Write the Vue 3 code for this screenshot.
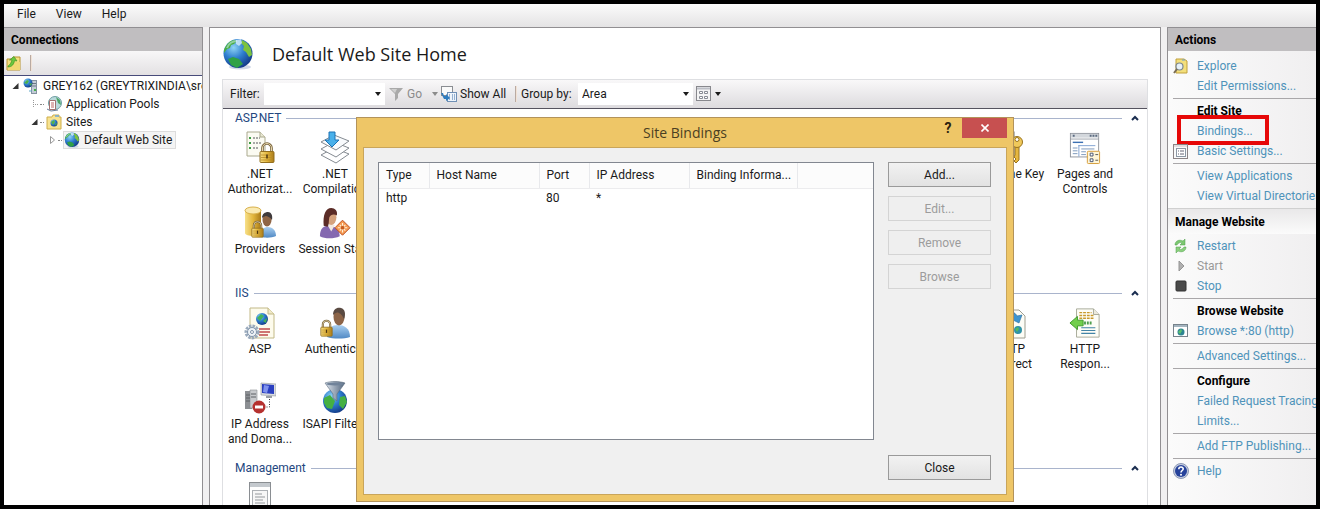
<script setup>
import { ref } from 'vue'

const menus = ['File', 'View', 'Help']
const filter = ref('')
const groupBy = ref('Area')

const tree = [
  { label: 'GREY162 (GREYTRIXINDIA\\sre', icon: 'server', level: 1, state: 'open' },
  { label: 'Application Pools', icon: 'pools', level: 2, state: 'leaf' },
  { label: 'Sites', icon: 'sites', level: 2, state: 'open' },
  { label: 'Default Web Site', icon: 'globe', level: 3, state: 'closed', selected: true },
]

const groups = [
  {
    name: 'ASP.NET',
    items: [
      { label: '.NET Authorizat...', icon: 'authorization' },
      { label: '.NET Compilation', icon: 'compilation' },
      { label: 'Machine Key', icon: 'key', col: 'col-11' },
      { label: 'Pages and Controls', icon: 'pages' },
      { label: 'Providers', icon: 'providers', col: 'col-1' },
      { label: 'Session State', icon: 'session' },
    ],
  },
  {
    name: 'IIS',
    items: [
      { label: 'ASP', icon: 'asp' },
      { label: 'Authentic...', icon: 'authentication' },
      { label: 'HTTP Redirect', icon: 'redirect', col: 'col-11' },
      { label: 'HTTP Respon...', icon: 'response' },
      { label: 'IP Address and Doma...', icon: 'ip', col: 'col-1' },
      { label: 'ISAPI Filters', icon: 'isapi' },
    ],
  },
  { name: 'Management', items: [{ label: '', icon: 'editor' }] },
]

const actions = [
  { type: 'link', label: 'Explore', icon: 'explore' },
  { type: 'link', label: 'Edit Permissions...' },
  { type: 'rule' },
  { type: 'title', label: 'Edit Site' },
  { type: 'link', label: 'Bindings...', marked: true },
  { type: 'link', label: 'Basic Settings...', icon: 'settings' },
  { type: 'rule' },
  { type: 'link', label: 'View Applications' },
  { type: 'link', label: 'View Virtual Directories' },
  { type: 'section', label: 'Manage Website' },
  { type: 'link', label: 'Restart', icon: 'restart' },
  { type: 'off', label: 'Start', icon: 'start' },
  { type: 'link', label: 'Stop', icon: 'stop' },
  { type: 'rule' },
  { type: 'title', label: 'Browse Website' },
  { type: 'link', label: 'Browse *:80 (http)', icon: 'browse' },
  { type: 'rule' },
  { type: 'link', label: 'Advanced Settings...' },
  { type: 'rule' },
  { type: 'title', label: 'Configure' },
  { type: 'link', label: 'Failed Request Tracing' },
  { type: 'link', label: 'Limits...' },
  { type: 'rule' },
  { type: 'link', label: 'Add FTP Publishing...' },
  { type: 'rule' },
  { type: 'link', label: 'Help', icon: 'help' },
]

const bindings = [{ type: 'http', host: '', port: '80', ip: '*', info: '' }]
const dialogButtons = [
  { label: 'Add...', disabled: false },
  { label: 'Edit...', disabled: true },
  { label: 'Remove', disabled: true },
  { label: 'Browse', disabled: true },
]
</script>

<template>
  <div class="window">
    <svg class="sprite" aria-hidden="true">
      <defs>
        <radialGradient id="g-sea" cx="0.35" cy="0.3" r="0.8">
          <stop offset="0" stop-color="#8fd4f5" />
          <stop offset="0.45" stop-color="#2f7fd0" />
          <stop offset="1" stop-color="#0d2f7c" />
        </radialGradient>
        <linearGradient id="g-gold" x1="0" x2="1">
          <stop offset="0" stop-color="#f7e08a" />
          <stop offset="0.5" stop-color="#e3b73d" />
          <stop offset="1" stop-color="#a97a18" />
        </linearGradient>
        <linearGradient id="g-metal" x1="0" x2="1">
          <stop offset="0" stop-color="#dfe6ee" />
          <stop offset="1" stop-color="#51647c" />
        </linearGradient>
        <linearGradient id="g-blue" x1="0" x2="0" y1="0" y2="1">
          <stop offset="0" stop-color="#a9cff0" />
          <stop offset="1" stop-color="#5089c4" />
        </linearGradient>
      </defs>

      <symbol id="i-globe" viewBox="0 0 32 32">
        <ellipse cx="18" cy="29" rx="11" ry="2.500" fill="#b9c6dc" opacity="0.7" />
        <circle cx="16" cy="15.500" r="14.500" fill="url(#g-sea)" />
        <path d="M2 12C4 7 7 3 12 2l3 1-3 3-3 1-1 3-3 1-3 4z" fill="#4caf3f" />
        <path d="M20 2l5 3 4 6 1 6-3 2-3-5-3-2 1-4-3-3z" fill="#7cc23f" />
        <path d="M6 21l5-2 6 2 4 5-6 4-6-3z" fill="#2fa145" />
        <path d="M14 2l5-1 1 4-3 3-3-2z" fill="#d7eefa" opacity="0.8" />
        <path d="M5 10c2-5 6-7 10-7" stroke="#d8f3ff" stroke-width="2" fill="none" opacity="0.5" />
      </symbol>

      <symbol id="i-lock" viewBox="0 0 16 22">
        <path d="M3.500 11V6.500a4.500 4.500 0 0 1 9 0V11" fill="none" stroke="#77613a" stroke-width="2.600" />
        <path d="M3.500 11V6.500a4.500 4.500 0 0 1 9 0V11" fill="none" stroke="#e6d8ac" stroke-width="1" />
        <rect x="1" y="10" width="14" height="11" rx="1" fill="url(#g-gold)" stroke="#94701f" />
        <path d="M2 13.500h12M2 16h12M2 18.500h12" stroke="#b98b27" stroke-width="0.800" />
        <path d="M8 13v4" stroke="#4b3510" stroke-width="1.500" />
      </symbol>

      <symbol id="i-server" viewBox="0 0 16 16">
        <rect x="8.500" y="2.500" width="5" height="13" fill="#c3ccd6" stroke="#8592a0" />
        <path d="M9 5.500h4M9 8h4" stroke="#6a7885" />
        <rect x="11" y="11" width="2" height="2" fill="#43b049" />
        <circle cx="5" cy="5" r="4.500" fill="url(#g-sea)" />
        <path d="M1 5l3-3 2 1-2 3zM6 6l3-1-1 3z" fill="#4cb04a" />
        <path d="M6 13h3" stroke="#5fa7c7" />
      </symbol>
      <symbol id="i-pools" viewBox="0 0 16 16">
        <circle cx="9" cy="7" r="6.500" fill="#b9d9dc" stroke="#6f9ea3" />
        <path d="M10 1l4 3 1 5-3-2z" fill="#4ba567" />
        <path d="M3.500 4.500h6v9h-6z" fill="#fff" stroke="#a07070" />
        <path d="M5 7h3M5 9h3M5 11h3" stroke="#b66" />
        <path d="M1 13l4 2 7-1" stroke="#6a7e99" fill="none" />
      </symbol>
      <symbol id="i-sites" viewBox="0 0 16 16">
        <path d="M1 3h5l1-2h6v2h2v12H1z" fill="#f7e391" stroke="#cfae4a" />
        <path d="M9 2h4" stroke="#6ea8dc" stroke-width="1.500" />
        <circle cx="8" cy="9" r="3.500" fill="url(#g-sea)" />
        <path d="M5 8l3-2 1 2-2 3zM9 10l2-1-1 3z" fill="#53b149" />
      </symbol>
      <symbol id="i-folder-up" viewBox="0 0 16 16">
        <path d="M1 4h5l1-2h7v13H1z" fill="#f5df7e" stroke="#b8942f" />
        <path d="M1.500 15L4 7h10v8z" fill="#f2d873" />
        <path d="M2 11c2-1 3-3 4-6L3.500 5 8 1.500 11 6l-2.500-.3C8 9 6 12 2 12z" fill="#6cc63f" stroke="#3b8f22" stroke-width="0.600" />
      </symbol>

      <symbol id="i-authorization" viewBox="0 0 32 34">
        <path d="M3 1h13l5 5v19H3z" fill="#fbfbf2" stroke="#aaa98e" />
        <path d="M16 1v5h5" fill="#e8e7d2" stroke="#aaa98e" />
        <path d="M5 7h2M5 12h2M5 17h2" stroke="#3d9d44" stroke-width="2" />
        <path d="M9 7h7M9 12h8M9 17h6" stroke="#8d8d8d" stroke-width="1.500" stroke-dasharray="2 1" />
        <use href="#i-lock" x="15" y="10" width="16" height="23" />
      </symbol>
      <symbol id="i-compilation" viewBox="0 0 32 34">
        <path d="M2 24l13-7 15 6-13 9z" fill="#fff" stroke="#858b92" />
        <path d="M2 18l13-7 15 6-13 9z" fill="#fff" stroke="#858b92" />
        <path d="M2 11l13-7 15 6-13 9z" fill="#f9fbfd" stroke="#858b92" />
        <path d="M10 1h6v8h4l-7 7-7-7h4z" fill="#49b0ea" stroke="#1c73b5" />
      </symbol>
      <symbol id="i-key" viewBox="0 0 32 34">
        <rect x="8" y="1" width="12" height="24" fill="#9aa19b" stroke="#6c716c" />
        <path d="M21 14h4v15l-3 3-2-2 2-2-2-2 1-2z" fill="#e6b73f" stroke="#9a731d" />
        <circle cx="23" cy="11" r="5.500" fill="#f0c95b" stroke="#9a731d" />
        <circle cx="23" cy="8.500" r="2" fill="#fff" stroke="#9a731d" />
      </symbol>
      <symbol id="i-pages" viewBox="0 0 34 34">
        <rect x="1.500" y="1.500" width="30" height="25" fill="#fff" stroke="#8e939b" />
        <path d="M2 4h29" stroke="#d3d7dc" stroke-width="4" />
        <path d="M4 4h2M22 4h2M25 4h2M28 4h2" stroke="#5b6b80" stroke-width="2" />
        <path d="M2 7.500h29" stroke="#9ba0a8" />
        <path d="M4 11h11" stroke="#3c70b3" stroke-width="1.500" />
        <path d="M10 14.500h18M10.500 14v12" stroke="#7d9fd0" />
        <path d="M4 17h5M4 20h5M4 23h5M13 18h14M13 21h5M13 24h5" stroke="#7895ba" />
        <rect x="19.500" y="20.500" width="13" height="13" rx="1" fill="#fff6d8" stroke="#d49b35" />
        <path d="M22.500 22.500h3v3h-3zM22.500 28.500h3v3h-3z" fill="#fff" stroke="#44516d" />
        <path d="M28 24h3M28 30h3" stroke="#555" />
      </symbol>
      <symbol id="i-providers" viewBox="0 0 32 34">
        <path d="M1 4v23c0 2 4 3 9 3s7-1 7-3V4z" fill="url(#g-gold)" />
        <ellipse cx="9" cy="4.500" rx="8" ry="3.500" fill="#faeab2" stroke="#d8b04a" />
        <path d="M17 31c0-8 3-10 7-10s8 3 8 9c-4 2-11 2-15 1z" fill="url(#g-blue)" />
        <ellipse cx="23" cy="14" rx="4.500" ry="6.500" fill="#8f6545" />
        <path d="M18 12c0-4 3-6 6-6s5 3 4 8c-2-3-5-4-6-4s-3 1-4 2z" fill="#3f3a3b" />
        <use href="#i-lock" x="7" y="14" width="13" height="18" />
      </symbol>
      <symbol id="i-session" viewBox="0 0 34 34">
        <path d="M1 31c0-8 4-11 9-11s12 3 12 11c-6 3-16 3-21 0z" fill="#8468b0" />
        <path d="M9 19l4 7 4-7z" fill="#f3e8e0" />
        <ellipse cx="13" cy="11" rx="5.500" ry="8" fill="#d5a27d" />
        <path d="M5 20C4 8 7 1 13 1c4 0 7 3 6 8-3-2-7-1-8 2-1 5 0 8-2 10z" fill="#5b2c27" />
        <path d="M25 14l8 8-8 8-8-8z" fill="#f59a52" stroke="#b84b1e" />
        <path d="M25 17v10M20 22h10M22 19l6 6M28 19l-6 6" stroke="#fff0d9" stroke-width="1.200" />
        <circle cx="25" cy="22" r="2" fill="#c95c1d" />
      </symbol>

      <symbol id="i-asp" viewBox="0 0 32 34">
        <path d="M6 2h18l6 6v24H6z" fill="#fdfbec" stroke="#c2b987" />
        <path d="M24 2v6h6" fill="#f0e9c6" stroke="#c2b987" />
        <circle cx="18" cy="13" r="6" fill="url(#g-sea)" />
        <path d="M13 12l4-4 3 2-4 5zM19 15l4-3-1 5z" fill="#43b35a" />
        <path d="M15 23h11M15 26h11M15 29h9" stroke="#c04b4b" stroke-width="1.500" />
        <circle cx="8" cy="26" r="6" fill="none" stroke="#9aaabd" stroke-width="3" stroke-dasharray="2.500 1" />
        <circle cx="8" cy="26" r="4.500" fill="#eef3f8" stroke="#8093aa" />
        <circle cx="8" cy="26" r="1.500" fill="#fff" stroke="#8093aa" />
      </symbol>
      <symbol id="i-authentication" viewBox="0 0 32 34">
        <path d="M8 31c0-9 5-12 11-12s12 3 12 12c-6 2-17 2-23 0z" fill="url(#g-blue)" />
        <ellipse cx="20" cy="11" rx="5.500" ry="8.500" fill="#8c6448" />
        <path d="M14 9c0-6 4-8 8-7s5 6 3 11c-2-4-3-5-5-6s-4 0-6 2z" fill="#5a4a42" />
        <use href="#i-lock" x="1" y="12" width="13" height="20" />
      </symbol>
      <symbol id="i-redirect" viewBox="0 0 32 34">
        <path d="M8 4h17l6 6v22H8z" fill="#fdfdf6" stroke="#9e9e90" />
        <path d="M11 10c6-6 10-4 12 0l5-1-3 8-8-4 3-1c-2-3-6-2-9-2z" fill="#3f95cf" stroke="#26699d" stroke-width="0.600" />
        <circle cx="24" cy="24" r="4" fill="#2f92a7" />
        <path d="M21 23l3-2 1 2-2 3z" fill="#54b860" />
      </symbol>
      <symbol id="i-response" viewBox="0 0 34 34">
        <path d="M8 2h18l6 6v24H8z" fill="#fdfdf6" stroke="#a5a996" />
        <path d="M26 2v6h6" fill="#eceadd" stroke="#a5a996" />
        <path d="M11 6h13M11 9h16M11 12h16" stroke="#c99a2b" stroke-width="1.500" stroke-dasharray="3 1" />
        <path d="M16 17h8" stroke="#4d9e4d" stroke-width="3" stroke-dasharray="2 1" />
        <path d="M13 22h15M13 25h15M13 28h15" stroke="#4384a6" stroke-width="1.200" />
        <path d="M1 17l8-7v4h6v6H9v4z" fill="#72cf4c" stroke="#3e9a2a" />
      </symbol>
      <symbol id="i-ip" viewBox="0 0 32 34">
        <path d="M1 10h7v18H1z" fill="#8c8f93" />
        <path d="M6 9h7v18H6z" fill="#c8cacd" stroke="#8a8d90" stroke-width="0.600" />
        <path d="M2 14h4M2 17h4M2 20h4M7 13h5M7 16h5" stroke="#5c6064" />
        <path d="M17 2l15 1v12l-15-1z" fill="#d9dcdf" stroke="#8d9298" stroke-width="0.600" />
        <path d="M18 3l12 1v9l-12-1z" fill="#2a3fc0" />
        <path d="M20 4l5 1-2 7-4-1z" fill="#7f92ee" />
        <path d="M22 15h6v2h-6z" fill="#9a9fa5" />
        <path d="M25.500 18v8h-6" fill="none" stroke="#333" stroke-dasharray="1 1.500" />
        <circle cx="15" cy="26" r="6.500" fill="#b5312f" />
        <path d="M11 26h8" stroke="#fff" stroke-width="3" />
      </symbol>
      <symbol id="i-isapi" viewBox="0 0 32 34">
        <circle cx="16" cy="20" r="12" fill="url(#g-sea)" />
        <path d="M5 17l6-3 5 6-3 8-5-1-3-5zM21 16l5-1 2 6-4 7-4-4z" fill="#45b043" />
        <path d="M6 2c6-2 14-2 20 0l-8 11v7l-4-3v-4z" fill="url(#g-metal)" stroke="#5c6c7e" stroke-width="0.600" />
        <ellipse cx="16" cy="3" rx="9" ry="1.500" fill="#71839a" />
      </symbol>
      <symbol id="i-editor" viewBox="0 0 32 34">
        <rect x="5.500" y="1.500" width="21" height="31" fill="#fff" stroke="#8a8e92" />
        <path d="M6 4h20" stroke="#c4c9ce" stroke-width="4" />
        <rect x="8.500" y="9.500" width="15" height="18" fill="#f7f7f7" stroke="#adb1b5" />
        <path d="M11 13h7M11 16h10M11 19h8M11 22h10" stroke="#95999d" />
      </symbol>

      <symbol id="i-explore" viewBox="0 0 16 16">
        <path d="M3 1h8l3 2v12H3z" fill="#f3df7b" stroke="#c0a03c" />
        <path d="M9 2h3" stroke="#6aa0d0" />
        <circle cx="6.500" cy="8.500" r="3.500" fill="#e7f1f7" stroke="#7b8790" stroke-width="1.200" />
        <path d="M4 11l-3 4" stroke="#7a6d55" stroke-width="2" />
      </symbol>
      <symbol id="i-settings" viewBox="0 0 16 16">
        <rect x="0.500" y="1.500" width="14" height="14" fill="#fafafa" stroke="#8c8486" />
        <path d="M1 3h13" stroke="#c9c2c5" />
        <rect x="3.500" y="5.500" width="9" height="8" fill="#fff" stroke="#8d98a5" />
        <path d="M5 8h1M7 8h4M5 11h1M7 11h4" stroke="#667" />
      </symbol>
      <symbol id="i-restart" viewBox="0 0 16 16">
        <path d="M2 7c0-4 4-6 8-4l2-2v6H7l2-2C7 4 5 5 4 7z" fill="#7cc871" stroke="#4c9f49" stroke-width="0.500" />
        <path d="M13 9c0 4-4 6-8 4l-2 2V9h5l-2 2c2 1 4 0 5-2z" fill="#8bd07d" stroke="#4c9f49" stroke-width="0.500" />
      </symbol>
      <symbol id="i-start" viewBox="0 0 16 16">
        <path d="M6 3l5 5-5 5z" fill="#b0b0b0" stroke="#969696" />
      </symbol>
      <symbol id="i-stop" viewBox="0 0 16 16">
        <rect x="3" y="3" width="10" height="10" rx="1" fill="#4a4a4a" stroke="#333" />
      </symbol>
      <symbol id="i-browse" viewBox="0 0 16 16">
        <rect x="0.500" y="1.500" width="14" height="12" fill="#fff" stroke="#77838c" />
        <path d="M1 3h13" stroke="#a5b5c0" stroke-width="2" />
        <circle cx="8" cy="9" r="3.500" fill="#2c8592" />
        <path d="M5 9l3-3 1 2-2 3z" fill="#5cc06c" />
      </symbol>
      <symbol id="i-help" viewBox="0 0 16 16">
        <circle cx="8" cy="8" r="7.500" fill="#c5cddf" stroke="#8c98b5" />
        <circle cx="8" cy="8" r="6" fill="#26429b" />
        <path d="M5.800 6.200c0-3 4.600-2.800 4.400-.2C10.100 7.500 8 7.600 8 9.500" fill="none" stroke="#fff" stroke-width="1.600" />
        <circle cx="8" cy="11.800" r="1" fill="#fff" />
      </symbol>
      <symbol id="i-funnel" viewBox="0 0 16 16">
        <path d="M1 2h14l-5 6v4l-3 3V8z" fill="#a9a9a9" />
        <path d="M3 3h6l-2 4z" fill="#cfcfcf" />
      </symbol>
      <symbol id="i-showall" viewBox="0 0 16 16">
        <rect x="0.500" y="0.500" width="11" height="9" fill="#fafafa" stroke="#8a8d92" />
        <rect x="6.500" y="6.500" width="9" height="9" fill="#eef4fb" stroke="#6f8fb5" />
        <path d="M8 9h1M11 9h1M13 9h1M8 11h1M11 11h1M13 11h1M8 13h1M11 13h1M13 13h1" stroke="#3f6ea8" />
        <path d="M0 7h2l1 3h2V8l4 4-4 3v-2H3z" fill="#2e7cbf" />
      </symbol>
      <symbol id="i-view" viewBox="0 0 16 16">
        <rect x="0.500" y="0.500" width="14" height="14" fill="#f4f4f4" stroke="#88888d" />
        <path d="M1 2.500h13" stroke="#bcbec6" stroke-width="2" />
        <path d="M3.500 5.500h3v2h-3zM8.500 5.500h3v2h-3zM3.500 10.500h3v2h-3zM8.500 10.500h3v2h-3z" fill="#fff" stroke="#888b94" />
      </symbol>
      <symbol id="i-down" viewBox="0 0 6 4"><path d="M0 0h6L3 4z" fill="currentColor" /></symbol>
      <symbol id="i-chevron" viewBox="0 0 8 6">
        <path d="M1 5l3-3 3 3" fill="none" stroke="currentColor" stroke-width="2" />
      </symbol>
      <symbol id="i-open" viewBox="0 0 8 8"><path d="M6.500 1v6h-6z" fill="#333" /></symbol>
      <symbol id="i-closed" viewBox="0 0 8 8"><path d="M1.500 0.500l4 3.500-4 3.500z" fill="#fff" stroke="#999" /></symbol>
      <symbol id="i-leaf" viewBox="0 0 8 8"><path d="M2.500 0v8M2 4.500h6" stroke="#999" stroke-dasharray="1 1" /></symbol>
    </svg>

    <nav class="menubar">
      <button v-for="m in menus" :key="m" type="button">{{ m }}</button>
    </nav>

    <div class="panes">
      <aside class="connections">
        <h2 class="pane-title">Connections</h2>
        <div class="mini-toolbar">
          <button type="button" aria-label="Up"><svg class="i16"><use href="#i-folder-up" /></svg></button>
          <span class="divider"></span>
        </div>
        <ul class="tree">
          <li v-for="n in tree" :key="n.label" :class="'level-' + n.level">
            <svg class="twist"><use :href="'#i-' + n.state" /></svg>
            <span class="dots"></span>
            <span class="node" :class="{ selected: n.selected }">
              <svg class="i16"><use :href="'#i-' + n.icon" /></svg>
              <span>{{ n.label }}</span>
            </span>
          </li>
        </ul>
      </aside>

      <main class="home">
        <header class="home-head">
          <svg class="i32"><use href="#i-globe" /></svg>
          <h1>Default Web Site Home</h1>
        </header>

        <div class="content">
          <div class="toolbar">
            <label class="filter-label" for="filter">Filter:</label>
            <span class="combo filter">
              <input id="filter" v-model="filter" type="text" />
              <svg class="arrow"><use href="#i-down" /></svg>
            </span>
            <button class="go" type="button" disabled>
              <svg class="i16"><use href="#i-funnel" /></svg>Go
              <svg class="arrow go-arrow"><use href="#i-down" /></svg>
            </button>
            <button class="show" type="button"><svg class="i16"><use href="#i-showall" /></svg>Show All</button>
            <span class="divider"></span>
            <label class="group-label" for="group">Group by:</label>
            <span class="combo group-by">
              <select id="group" v-model="groupBy"><option>Area</option></select>
              <svg class="arrow"><use href="#i-down" /></svg>
            </span>
            <button class="view" type="button" aria-label="View">
              <svg class="i16"><use href="#i-view" /></svg>
              <svg class="arrow"><use href="#i-down" /></svg>
            </button>
          </div>

          <section v-for="g in groups" :key="g.name" class="group">
            <header class="group-head">
              <h3>{{ g.name }}</h3>
              <span class="line"></span>
              <button type="button" :aria-label="'Collapse ' + g.name"><svg class="chevron"><use href="#i-chevron" /></svg></button>
            </header>
            <div class="grid">
              <div v-for="f in g.items" :key="f.icon" class="feature" :class="f.col">
                <svg class="feature-icon"><use :href="'#i-' + f.icon" /></svg>
                <span>{{ f.label }}</span>
              </div>
            </div>
          </section>
        </div>
      </main>

      <aside class="actions">
        <h2 class="pane-title">Actions</h2>
        <div class="action-list">
          <template v-for="(a, i) in actions" :key="i">
            <hr v-if="a.type === 'rule'" />
            <h3 v-else-if="a.type === 'section'" class="section">{{ a.label }}</h3>
            <div v-else class="action">
              <svg v-if="a.icon" class="i16"><use :href="'#i-' + a.icon" /></svg>
              <span v-else class="i16"></span>
              <h4 v-if="a.type === 'title'">{{ a.label }}</h4>
              <button v-else-if="a.type === 'off'" type="button" disabled>{{ a.label }}</button>
              <a v-else href="#">{{ a.label }}</a>
              <span v-if="a.marked" class="mark"></span>
            </div>
          </template>
        </div>
      </aside>
    </div>

    <div class="dialog" role="dialog" aria-labelledby="dialog-title">
      <header class="dialog-head">
        <h2 id="dialog-title">Site Bindings</h2>
        <div class="caption">
          <button class="ask" type="button">?</button>
          <button class="shut" type="button" aria-label="Close window">
            <svg viewBox="0 0 8 8"><path d="M0.500 0.500l7 7M7.500 0.500l-7 7" stroke="#fff" stroke-width="1.600" /></svg>
          </button>
        </div>
      </header>
      <div class="dialog-body">
        <div class="list">
          <table>
            <colgroup>
              <col class="w-type" /><col class="w-host" /><col class="w-port" /><col class="w-ip" /><col class="w-info" /><col />
            </colgroup>
            <thead>
              <tr>
                <th>Type</th><th>Host Name</th><th>Port</th><th>IP Address</th><th>Binding Informa...</th><td></td>
              </tr>
            </thead>
            <tbody>
              <tr v-for="b in bindings" :key="b.port">
                <td>{{ b.type }}</td><td>{{ b.host }}</td><td>{{ b.port }}</td><td>{{ b.ip }}</td><td>{{ b.info }}</td><td></td>
              </tr>
            </tbody>
          </table>
        </div>
        <div class="side">
          <button v-for="b in dialogButtons" :key="b.label" type="button" :disabled="b.disabled">{{ b.label }}</button>
        </div>
        <div class="foot"><button type="button">Close</button></div>
      </div>
    </div>
  </div>
</template>

<style>
body {
  margin: 0;
}
</style>

<style scoped>
* {
  box-sizing: border-box;
}
.window {
  position: relative;
  display: flex;
  flex-direction: column;
  height: 100vh;
  overflow: hidden;
  border: 4px solid #000;
  background: #f1f0f1;
  color: #1a1a1a;
  font: 12px/16px Roboto, 'Open Sans', sans-serif;
}
.sprite {
  position: absolute;
  width: 0;
  height: 0;
}
h1, h2, h3, h4, ul {
  margin: 0;
  padding: 0;
  font-size: 12px;
}
button, input, select {
  margin: 0;
  padding: 0;
  border: 0;
  background: none;
  color: inherit;
  font: inherit;
}
svg {
  flex: none;
}
.i16 {
  flex: none;
  width: 16px;
  height: 16px;
}
.i32 {
  width: 32px;
  height: 32px;
}
.arrow {
  width: 6px;
  height: 4px;
}
.menubar {
  display: flex;
  flex: none;
  gap: 20px;
  height: 23px;
  padding: 0 13px 3px;
  background: linear-gradient(#fbfbfb, #e4e3e4);
}
.panes {
  display: grid;
  flex: 1;
  grid-template-columns: 199px minmax(0, 1fr) 149px;
  gap: 6px;
  min-height: 0;
}
.pane-title {
  height: 23px;
  padding: 0 7px;
  background: #c0bec0;
  line-height: 24px;
  font-weight: 700;
  color: #000;
}
.connections {
  overflow: hidden;
  border-top: 1px solid #918f92;
  border-right: 1px solid #918f92;
  background: #fff;
}
.mini-toolbar {
  display: flex;
  align-items: center;
  gap: 8px;
  height: 25px;
  padding-left: 2px;
  border-bottom: 1px solid #474b7a;
  background: linear-gradient(#f8f7f8, #e3e1e3);
}
.mini-toolbar button {
  height: 16px;
}
.divider {
  width: 2px;
  height: 16px;
  border-left: 1px solid #b9aaa2;
  border-right: 1px solid #f1e2d6;
}
.tree {
  padding-top: 1px;
  list-style: none;
  white-space: nowrap;
}
.tree li {
  display: flex;
  align-items: center;
  height: 18px;
  padding-left: 8px;
}
.tree .level-2 {
  padding-left: 27px;
}
.tree .level-3 {
  padding-left: 45px;
}
.twist {
  width: 8px;
  height: 8px;
}
.dots {
  width: 4px;
  margin: 0 1px;
  border-top: 1px dotted #888;
}
.node {
  display: flex;
  align-items: center;
  gap: 4px;
  padding-right: 3px;
  line-height: 16px;
  border: 1px solid transparent;
}
.node.selected {
  background: #f4f4f4;
  border-color: #dcdcdc;
}
.home {
  display: flex;
  flex-direction: column;
  min-height: 0;
  padding: 0 12px;
  overflow: hidden;
  border: 1px solid #918f92;
  border-bottom: 0;
  background: #fff;
}
.home-head {
  display: flex;
  flex: none;
  align-items: center;
  gap: 18px;
  height: 51px;
}
.home-head h1 {
  font-family: 'Open Sans', sans-serif;
  font-size: 18px;
  font-weight: 400;
  line-height: 28px;
}
.content {
  flex: 1;
  min-height: 0;
  border: 1px solid #dedfe2;
  border-bottom: 0;
}
.toolbar {
  display: flex;
  align-items: center;
  height: 29px;
  padding-left: 7px;
  border-bottom: 1px solid #55535f;
  background: linear-gradient(#f9f8f9, #dddbde);
  white-space: nowrap;
}
.combo {
  display: flex;
  align-items: center;
  height: 22px;
  padding-right: 4px;
  background: #fff;
}
.combo input, .combo select {
  flex: 1;
  width: 100%;
  min-width: 0;
  height: 22px;
  padding: 0 4px;
  appearance: none;
  outline: 0;
}
.filter-label {
  width: 34px;
}
.filter {
  width: 121px;
}
.group-label {
  width: 57px;
}
.group-by {
  width: 115px;
}
.toolbar button {
  display: flex;
  align-items: center;
  gap: 3px;
  height: 22px;
}
.toolbar .go {
  width: 50px;
  margin-left: 3px;
  color: #8b8b8b;
}
.go-arrow {
  margin-left: auto;
}
.toolbar .show {
  width: 66px;
  margin-left: 3px;
}
.toolbar .divider {
  margin: 0 4px 0 8px;
}
.toolbar .view {
  margin-left: 3px;
}
.group {
  height: 175px;
}
.group-head {
  display: flex;
  align-items: center;
  gap: 5px;
  height: 18px;
  padding: 0 8px 0 12px;
}
.group-head h3 {
  font-weight: 400;
  color: #24477f;
}
.line {
  flex: 1;
  height: 1px;
  margin-right: 4px;
  background: #a9b4cc;
}
.group-head button {
  display: flex;
  color: #1a2d50;
}
.chevron {
  width: 8px;
  height: 6px;
}
.grid {
  display: grid;
  grid-template-columns: repeat(auto-fill, 75px);
  grid-auto-rows: 75px;
  padding: 4px 0 0;
}
.feature {
  display: flex;
  flex-direction: column;
  align-items: center;
  gap: 2px;
  padding-right: 1px;
  text-align: center;
  line-height: 15px;
}
.feature-icon {
  width: 32px;
  height: 34px;
}
.col-1 {
  grid-column: 1;
}
.col-11 {
  grid-column: 11;
}
.actions {
  overflow: hidden;
  border-top: 1px solid #918f92;
  border-left: 1px solid #918f92;
  background: linear-gradient(90deg, #fbfbfb, #f0eff0);
  white-space: nowrap;
}
.action-list {
  padding-top: 5px;
}
.action {
  position: relative;
  display: flex;
  align-items: center;
  gap: 8px;
  height: 20px;
  padding-left: 5px;
}
.action a {
  color: #4f93ba;
  text-decoration: none;
}
.action button {
  color: #999;
}
h4, .section {
  font-weight: 700;
  color: #000;
}
.section {
  height: 26px;
  margin: 2px 0;
  padding-left: 7px;
  border-top: 1px solid #d0d0d0;
  background: linear-gradient(#e9e8e9, #fbfbfb);
  line-height: 27px;
}
hr {
  height: 1px;
  margin: 2px 0 2px 5px;
  border: 0;
  background: #a9a7a9;
}
.mark {
  position: absolute;
  top: -6px;
  left: 9px;
  width: 92px;
  height: 30px;
  border: 4px solid #e60808;
}
.dialog {
  position: absolute;
  top: 113px;
  left: 352px;
  right: 302px;
  padding: 0 6px 6px;
  border: 1px solid #b3935a;
  background: #eec667;
}
.dialog-head {
  position: relative;
  display: flex;
  align-items: center;
  justify-content: center;
  height: 29px;
}
.dialog-head h2 {
  color: #4b3f22;
  font-family: 'Open Sans', sans-serif;
  font-size: 14px;
  font-weight: 400;
  line-height: 20px;
}
.caption {
  position: absolute;
  top: 0;
  right: 0;
  display: flex;
  gap: 8px;
}
.ask {
  width: 12px;
  height: 20px;
  color: #2b2210;
  font-size: 14px;
  font-weight: 700;
}
.shut {
  display: flex;
  align-items: center;
  justify-content: center;
  width: 45px;
  height: 20px;
  background: #c75050;
}
.shut svg {
  width: 8px;
  height: 8px;
}
.dialog-body {
  display: grid;
  grid-template-columns: minmax(0, 1fr) 103px;
  gap: 15px 14px;
  padding: 14px 15px 14px 14px;
  border: 1px solid #c9a55a;
  background: #f0f0f0;
}
.list {
  height: 278px;
  border: 1px solid #828790;
  background: #fff;
}
table {
  width: 100%;
  table-layout: fixed;
  border-collapse: collapse;
}
.w-type, .w-port {
  width: 50px;
}
.w-host {
  width: 110px;
}
.w-ip {
  width: 100px;
}
.w-info {
  width: 108px;
}
th, td {
  height: 20px;
  padding: 0 0 0 7px;
  font-weight: 400;
  text-align: left;
  white-space: nowrap;
}
th {
  border-right: 1px solid #e8e9ec;
}
thead th, thead td {
  height: 25px;
  border-bottom: 1px solid #ececee;
  background: #fcfcfc;
}
.side {
  display: flex;
  flex-direction: column;
  gap: 9px;
}
.side button, .foot button {
  width: 103px;
  height: 25px;
  border: 1px solid #9a9a9a;
  background: linear-gradient(#f2f2f2, #e2e2e2);
}
.side button:disabled {
  border-color: #d4d4d4;
  background: #efefef;
  color: #9c9c9c;
}
.foot {
  display: flex;
  grid-column: 2;
}
</style>
